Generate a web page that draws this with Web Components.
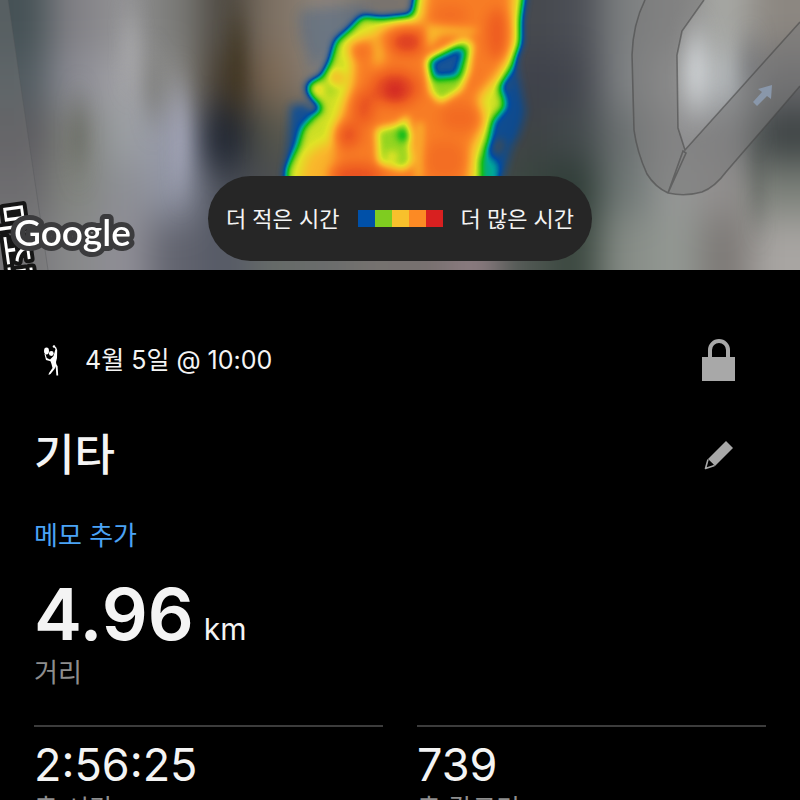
<!DOCTYPE html>
<html lang="ko">
<head>
<meta charset="utf-8">
<meta name="viewport" content="width=device-width, initial-scale=1">
<title>기타</title>
<style>
  body{
    margin: 0;
    background: #000;
    color: #f4f4f4;
    font-family: Inter, 'Noto Sans CJK KR', sans-serif;
  }
</style>
</head>
<body>
<activity-page>
  <activity-map slot="map">
    <heat-legend less="더 적은 시간" more="더 많은 시간"></heat-legend>
  </activity-map>
  <activity-header when="4월 5일 @ 10:00">기타</activity-header>
  <memo-link href="#memo">메모 추가</memo-link>
  <stat-figure size="large" value="4.96" unit="km" label="거리"></stat-figure>
  <stat-grid>
    <stat-figure value="2:56:25" label="총 시간"></stat-figure>
    <stat-figure value="739" label="총 칼로리"></stat-figure>
  </stat-grid>
</activity-page>

<script>
class ActivityPage extends HTMLElement{
  constructor( ){
    super( );
    this.attachShadow( { mode: 'open' } ).innerHTML = `
      <style>
        :host{
          display: block;
          height: 100vh;
          overflow: auto;
          scrollbar-width: none;
        }
        main{
          display: flex;
          flex-direction: column;
          padding: 48px 34px 0;
        }
      </style>
      <slot name="map"></slot>
      <main><slot></slot></main>
    `;
  }
}

class ActivityMap extends HTMLElement{
  // satellite colours, one row of tiles per line
  tiles = [
    '465256 828186 929294 7b7b78 4f4a42 7f7264 8d847c 7d756d 7d756d 7d756d 45484d 4b4e55 7c7f80 8b8b8b a8a9a5 8c8781',
    '525c61 8d8d96 a2a2a6 898987 42382a 806b55 85807c 7d756d 7d756d 7d756d 3d404a 42454d 7e8183 a0a0a0 b8bdc0 69696c',
    '5c5b60 7c7e78 9b9fa3 9699aa 1f2530 55564c 555555 555555 555555 555555 3e4244 434a4c 6b7071 8f8f90 88888a 3c4243',
    '68676b 82857f 8d8f95 9296a6 4a4e58 4a4d50 4a4d50 4a4d50 4a4d50 4a4d50 39463f 2d3b35 6f7775 959796 928f8e 7b8079',
    '77767a 88898a 8f8e96 62646f 565a66 666b68 6a6c6c 75726f 77706f 8b7b80 4f5752 3a473f 868c86 939893 7c7875 a8a5a2',
  ];

  constructor( ){
    super( );
    this.attachShadow( { mode: 'open' } );
  }

  connectedCallback( ){
    this.render( );
  }

  ground( ){
    const rows = this.tiles.map( r => r.split(' ') );
    let out = '';
    rows.forEach( ( row, y ) =>{
      row.forEach( ( c, x ) =>{
        // the border tiles run past the edge so the blur stays opaque
        const x0 = x === 0 ? -100 : x * 50;
        const x1 = x === row.length - 1 ? 900 : x * 50 + 51;
        const y0 = y === 0 ? -100 : y * 54;
        const y1 = y === rows.length - 1 ? 370 : y * 54 + 55;
        out += `<rect x="${ x0 }" y="${ y0 }" width="${ x1 - x0 }" height="${ y1 - y0 }" fill="#${ c }"/>`;
      } );
    } );
    return out;
  }

  render( ){
    this.shadowRoot.innerHTML = `
      <style>
        :host{
          display: block;
          position: relative;
        }
        svg{
          display: block;
          width: 100%;
          height: 270px;
        }
        .legend{
          position: absolute;
          left: 0;
          right: 0;
          bottom: 9px;
          display: flex;
          justify-content: center;
        }
        .halo{
          paint-order: stroke;
          stroke-linejoin: round;
        }
      </style>
      <svg viewBox="0 0 800 270" preserveAspectRatio="xMidYMid slice" role="img" aria-label="Google">
        <defs>
          <filter id="soft" filterUnits="userSpaceOnUse" x="-90" y="-90" width="980" height="450" color-interpolation-filters="sRGB">
            <feGaussianBlur stdDeviation="17 20"/>
          </filter>
          <filter id="smear" filterUnits="userSpaceOnUse" x="-90" y="-90" width="980" height="450" color-interpolation-filters="sRGB">
            <feGaussianBlur stdDeviation="8 20"/>
          </filter>
          <filter id="haze" filterUnits="userSpaceOnUse" x="200" y="-60" width="420" height="320" color-interpolation-filters="sRGB">
            <feGaussianBlur stdDeviation="5"/>
          </filter>
          <!-- grey level = time spent, mapped to the heat ramp -->
          <filter id="heat" filterUnits="userSpaceOnUse" x="240" y="-30" width="340" height="260" color-interpolation-filters="sRGB">
            <feGaussianBlur stdDeviation="4"/>
            <feColorMatrix values="1 0 0 0 0  1 0 0 0 0  1 0 0 0 0  1 0 0 0 0"/>
            <feComponentTransfer>
              <feFuncR type="table" tableValues="0 0 0 0 .08 .5 .88 .98 .98 .94 .82"/>
              <feFuncG type="table" tableValues=".3 .3 .3 .66 .74 .82 .89 .72 .52 .38 .15"/>
              <feFuncB type="table" tableValues=".62 .62 .64 .6 .1 .12 .15 .17 .15 .13 .14"/>
              <feFuncA type="table" tableValues="0 .4 1 1 1 1 1 1 1 1 1"/>
            </feComponentTransfer>
          </filter>
        </defs>

        <g filter="url(#soft)">${ this.ground( ) }</g>
        <g filter="url(#smear)">
          <path d="M176 90h10v90h-10z" fill="#bcbed2" opacity=".7"/>
          <path d="M122 20h18v50h-18z" fill="#bbbbbd" opacity=".5"/>
          <path d="M72 110h14v50h-14z" fill="#5f6259" opacity=".7"/>
          <path d="M146 70h14v40h-14z" fill="#66655f" opacity=".6"/>
          <path d="M230 20h14v80h-14z" fill="#35290f" opacity=".6"/>
          <path d="M206 120h28v40h-28z" fill="#1b222e" opacity=".5"/>
          <path d="M684 40h24v60h-24z" fill="#dce0e2" opacity=".7"/>
          <path d="M754 130h8v90h-8z" fill="#39413c" opacity=".5"/>
          <path d="M738 50h24v30h-24z" fill="#505053" opacity=".5"/>
        </g>

        <path d="M0 0H8L48 270H0z" fill="#777" opacity=".35"/>
        <path d="M8 0L48 270" stroke="#55575a" opacity=".4" fill="none"/>

        <path d="M645 0Q633 24 632 55V115Q635 150 645 172Q655 188 668 193Q685 197 702 192Q715 187 726 172L800 86V22L685 150L678 128L677 55L682 31L704 0z" fill="#7a7a7a" opacity=".55"/>
        <path d="M645 0Q633 24 632 55L634 130Q637 152 647 174Q655 187 668 193Q685 197 702 192Q715 187 726 172L800 86M800 22L685 150L678 128L677 55L682 31L704 0M683 151L668 193L686 153z" fill="none" stroke="#444" stroke-width="1.6" opacity=".55"/>
        <path d="M753 102L762 92L758 89L772 85L771 99L767 96L757 106z" fill="#8997aa"/>

        <g filter="url(#heat)">
          <path d="M200 -60H620V260H200z" fill="#000"/>
          <path d="M300 10Q298 25 303 45Q310 55 310 72L345 40L370 8L420 0z" fill="#0e0e0e" filter="url(#haze)"/>
          <path d="M290 105L305 103L325 120L297 176H284L288 140z" fill="#2a2a2a"/>
          <path d="M515 55L526 110Q522 135 513 146L504 176H470V120L508 85z" fill="#2a2a2a"/>
          <path d="M498 139Q490 148 497 156Q505 150 504 140z" fill="#0a0a0a"/>
          <path d="M484 150L498 164L502 200H480z" fill="#505050"/>
          <path d="M286 200V170L298 146L303 128L322 108L313 99Q304 89 309 83L322 76L330 61L336 41L350 29L362 16L383 18L412 15L418 -20H527L521 20L521 43L512 67L500 88L505 106L492 121L488 142L481 160V200z" fill="#949494"/>
          <g filter="url(#haze)">
            <path d="M322 200L334 146L342 112L352 84L354 60L348 46L366 38L388 26L422 22L430 -40H514L511 45L500 72L478 98L484 122L472 150L466 220z" fill="#d2d2d2"/>
            <path d="M290 220L306 156L326 140L336 160L330 220z" fill="#b4b4b4"/>
            <path d="M376 26L382 60L378 70L374 50z" fill="#909090"/>
          </g>
          <path d="M426 60L463 39L473 43L469 72L461 90L440 103L430 92z" fill="#848484"/>
          <path d="M429 60L458 47L466 50L458 77L433 79z" fill="#2b2b2b"/>
          <path d="M472 68Q484 64 482 80L474 90L465 82z" fill="#d4d4d4"/>
          <path d="M376 129L398 124L408 115L412 163L404 170L378 164z" fill="#858585"/>
          <circle cx="404" cy="135" r="6" fill="#505050"/>
          <circle cx="392" cy="157" r="6" fill="#a0a0a0"/>
          <path d="M321 80Q314 94 330 96L345 82L344 66z" fill="#888"/>
          <circle cx="318" cy="89" r="7" fill="#a2a2a2"/>
          <circle cx="337" cy="78" r="8" fill="#b0b0b0"/>
          <path d="M352 44L368 42L374 54L362 62L352 57z" fill="#d6d6d6"/>
          <g filter="url(#haze)">
            <ellipse cx="407" cy="42" rx="17" ry="13" fill="#f4f4f4"/>
            <ellipse cx="395" cy="88" rx="26" ry="19" fill="#ececec"/>
            <ellipse cx="364" cy="108" rx="11" ry="17" fill="#ececec"/>
            <circle cx="348" cy="135" r="13" fill="#ececec"/>
            <ellipse cx="356" cy="175" rx="27" ry="12" fill="#ececec"/>
            <ellipse cx="497" cy="34" rx="11" ry="26" fill="#e8e8e8"/>
            <ellipse cx="450" cy="15" rx="18" ry="10" fill="#dcdcdc"/>
            <ellipse cx="460" cy="118" rx="20" ry="14" fill="#dedede"/>
            <ellipse cx="445" cy="160" rx="20" ry="20" fill="#dcdcdc"/>
            <circle cx="395" cy="90" r="11" fill="#fff"/>
          </g>
          <path d="M416 122L424 122L422 180H415z" fill="#b0b0b0"/>
          <path d="M426 24L480 29L472 35L442 35L426 50z" fill="#b2b2b2"/>
        </g>

        <text class="halo" transform="translate(-2 206) rotate(82)" font-size="33" font-weight="500" fill="#fff" stroke="#151515" stroke-width="8">마조로</text>
        <text class="halo" x="14" y="246" font-family="Lato, sans-serif" font-size="37" font-weight="600" fill="#fff" stroke="#3b3b3d" stroke-width="10">Google</text>
      </svg>
      <div class="legend"><slot></slot></div>
    `;
  }
}

class HeatLegend extends HTMLElement{
  colors = ['#0050a8', '#7fcc20', '#f8c02c', '#fc8a24', '#d82020'];

  constructor( ){
    super( );
    this.attachShadow( { mode: 'open' } );
  }

  connectedCallback( ){
    const cells = this.colors.map( c => `<i style="background:${ c }"></i>` ).join('');
    this.shadowRoot.innerHTML = `
      <style>
        :host{
          display: flex;
          align-items: center;
          gap: 18px;
          height: 85px;
          padding: 0 18px;
          border-radius: 43px;
          background: #262626;
          font-size: 22px;
          line-height: 32px;
          white-space: nowrap;
        }
        .ramp{
          display: flex;
        }
        i{
          width: 17px;
          height: 17px;
        }
      </style>
      <span>${ this.getAttribute('less') }</span>
      <div class="ramp">${ cells }</div>
      <span>${ this.getAttribute('more') }</span>
    `;
  }
}

class ActivityHeader extends HTMLElement{
  constructor( ){
    super( );
    this.attachShadow( { mode: 'open' } );
  }

  connectedCallback( ){
    this.shadowRoot.innerHTML = `
      <style>
        :host{
          display: block;
        }
        .row{
          display: flex;
          align-items: center;
          justify-content: space-between;
          height: 84px;
          padding-right: 25px;
        }
        .row.name{
          height: 106px;
        }
        .when{
          display: flex;
          align-items: center;
          gap: 15px;
          font-size: 25px;
          line-height: 32px;
        }
        h1{
          margin: 0;
          font-size: 44px;
          line-height: 64px;
          font-weight: 500;
        }
        svg{
          display: block;
        }
        button{
          display: grid;
          place-items: center;
          width: 44px;
          height: 56px;
          padding: 0;
          border: 0;
          background: none;
          color: #a8a8a8;
          cursor: pointer;
        }
      </style>
      <div class="row">
        <div class="when">
          <svg width="36" height="36" viewBox="0 0 36 36" fill="#fff" aria-hidden="true">
            <ellipse cx="12.5" cy="9" rx="2.5" ry="3.4"/>
            <circle cx="20" cy="4.5" r="1.3"/>
            <circle cx="17.3" cy="11.5" r="2.4"/>
            <path d="M11.5 12L12.8 16L16 17.5L19.5 14L21.5 7L20 5.2L22 5L23.2 8L23 16L22 20L22.5 23L20.5 27L16.5 32L14.5 33L15 31L18.5 26L17.5 22L16.5 19.2L12 18L10.5 12z"/>
            <path d="M21 21L23.6 24L24.2 33.5H22.4L21.8 26z"/>
          </svg>
          <time>${ this.getAttribute('when') }</time>
        </div>
        <button type="button" aria-label="공개 설정">
          <svg width="34" height="44" viewBox="0 0 34 44">
            <path d="M8 20V12a9 9 0 0 1 18 0V20" fill="none" stroke="currentColor" stroke-width="4"/>
            <path d="M0 19H33V43H0z" fill="currentColor"/>
          </svg>
        </button>
      </div>
      <div class="row name">
        <h1><slot></slot></h1>
        <button type="button" aria-label="이름 편집">
          <svg width="30" height="30" viewBox="0 0 30 30">
            <path d="M22 1L29 8L11 26L4 19z" fill="currentColor"/>
            <path d="M4 19.5L1.5 28.5L10.5 25.5" fill="none" stroke="currentColor" stroke-width="1.6" stroke-linejoin="round"/>
            <path d="M5 20.5L9.5 24.5L4.3 26z" fill="#000"/>
          </svg>
        </button>
      </div>
    `;
  }
}

class MemoLink extends HTMLElement{
  constructor( ){
    super( );
    this.attachShadow( { mode: 'open' } );
  }

  connectedCallback( ){
    this.shadowRoot.innerHTML = `
      <style>
        :host{
          display: block;
          padding: 12px 0;
          font-size: 26px;
          line-height: 32px;
        }
        a{
          color: #4ba3f5;
          text-decoration: none;
        }
      </style>
      <a href="${ this.getAttribute('href') }"><slot></slot></a>
    `;
  }
}

class StatFigure extends HTMLElement{
  constructor( ){
    super( );
    this.attachShadow( { mode: 'open' } );
  }

  connectedCallback( ){
    const unit = this.getAttribute('unit');
    this.shadowRoot.innerHTML = `
      <style>
        :host{
          display: block;
          padding-top: 12px;
          border-top: 2px solid #3c3c3c;
        }
        :host([size="large"]){
          border: 0;
        }
        .value{
          display: flex;
          align-items: baseline;
          gap: 10px;
          font-size: 45px;
          line-height: 52px;
        }
        :host([size="large"]) .value{
          padding-bottom: 3px;
          font-size: 72px;
          line-height: 76px;
          font-weight: 600;
        }
        .value small{
          font-size: 30px;
          line-height: 32px;
          font-weight: 400;
        }
        .label{
          color: #8e8e8e;
          font-size: 26px;
          line-height: 36px;
        }
      </style>
      <div class="value"><span>${ this.getAttribute('value') }</span>${ unit ? `<small>${ unit }</small>` : '' }</div>
      <div class="label">${ this.getAttribute('label') }</div>
    `;
  }
}

class StatGrid extends HTMLElement{
  constructor( ){
    super( );
    this.attachShadow( { mode: 'open' } ).innerHTML = `
      <style>
        :host{
          display: grid;
          grid-template-columns: 1fr 1fr;
          gap: 34px;
          margin-top: 34px;
        }
      </style>
      <slot></slot>
    `;
  }
}

customElements.define('activity-page', ActivityPage );
customElements.define('activity-map', ActivityMap );
customElements.define('heat-legend', HeatLegend );
customElements.define('activity-header', ActivityHeader );
customElements.define('memo-link', MemoLink );
customElements.define('stat-figure', StatFigure );
customElements.define('stat-grid', StatGrid );
</script>
</body>
</html>
